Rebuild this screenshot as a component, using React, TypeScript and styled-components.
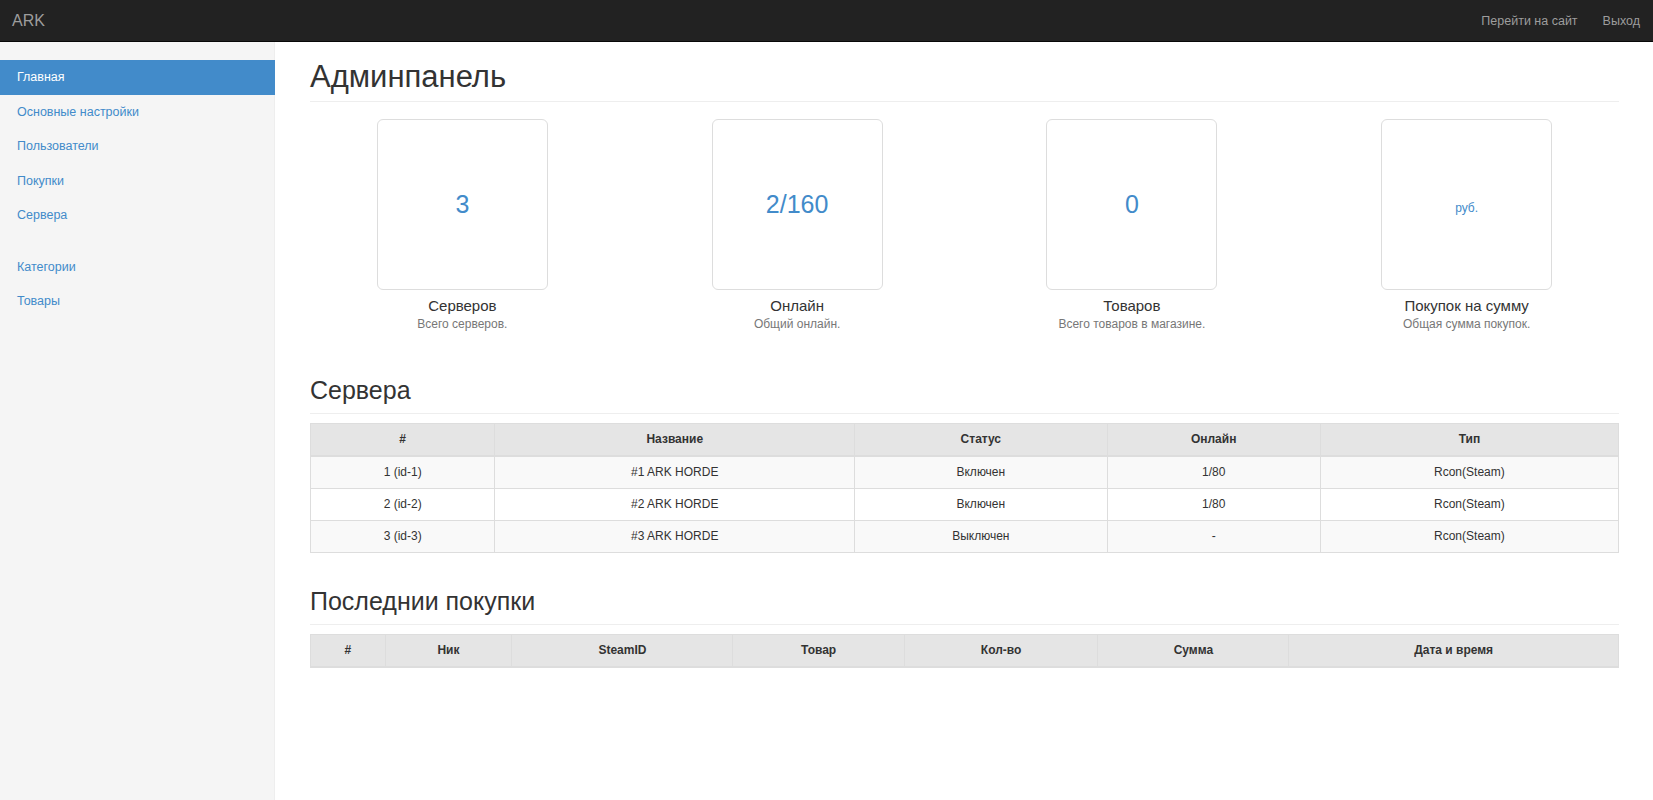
import React from 'react'
import styled, { createGlobalStyle } from 'styled-components'

const GlobalStyle = createGlobalStyle`
  html, body {
    margin: 0;
    padding: 0;
    background: #fff;
  }
  body {
    font-family: 'Liberation Sans', Arial, sans-serif;
    font-size: 12.5px;
    color: #333;
  }
  * {
    box-sizing: border-box;
  }
`

const Navbar = styled.div`
  align-items: center;
  background-color: #222;
  border-bottom: 1px solid #080808;
  display: flex;
  height: 42px;
  justify-content: space-between;
  padding: 0 13px 0 12px;
`

const Brand = styled.a`
  color: #9d9d9d;
  font-size: 16px;
  text-decoration: none;
`

const NavLinks = styled.div`
  display: flex;
  gap: 25px;
`

const NavLink = styled.a`
  color: #9d9d9d;
  font-size: 12.5px;
  text-decoration: none;
`

const Layout = styled.div`
  display: flex;
  min-height: calc(100vh - 42px);
`

const Sidebar = styled.div`
  background-color: #f5f5f5;
  border-right: 1px solid #eee;
  flex: 0 0 275px;
  padding-top: 18px;
`

const NavGroup = styled.ul`
  list-style: none;
  margin: 0 -1px 17px 0;
  padding: 0;
`

const SideItem = styled.li<{ $active?: boolean }>`
  background-color: ${({ $active }) => ($active ? '#428bca' : 'transparent')};
  color: ${({ $active }) => ($active ? '#fff' : '#428bca')};
  font-size: 12.5px;
  line-height: 18.5px;
  padding: 8px 17px;
  cursor: pointer;
`

const Main = styled.div`
  flex: 1;
  min-width: 0;
  padding: 0 34px 40px 35px;
`

const PageHeader = styled.h1`
  border-bottom: 1px solid #eee;
  font-size: 31px;
  font-weight: 400;
  line-height: 34px;
  margin: 18px 0 0;
  padding-bottom: 7px;
`

const Stats = styled.div`
  display: grid;
  grid-template-columns: repeat(4, 1fr);
  margin: 17px -15px 0;
`

const Stat = styled.div`
  align-items: center;
  display: flex;
  flex-direction: column;
`

const StatBox = styled.div<{ $small?: boolean }>`
  align-items: center;
  border: 1px solid #ddd;
  border-radius: 6px;
  color: #428bca;
  display: flex;
  font-size: ${({ $small }) => ($small ? '12px' : '25px')};
  height: 171px;
  justify-content: center;
  padding-top: ${({ $small }) => ($small ? '6px' : '0')};
  width: 171px;
`

const StatTitle = styled.div`
  font-size: 15px;
  line-height: 20px;
  margin-top: 6px;
`

const StatNote = styled.div`
  color: #777;
  font-size: 12px;
  line-height: 16px;
`

const SectionHeader = styled.h2<{ $top: number }>`
  border-bottom: 1px solid #eee;
  font-size: 25px;
  font-weight: 400;
  line-height: 28px;
  margin: ${({ $top }) => $top}px 0 0;
  padding-bottom: 9px;
`

const Table = styled.table`
  border: 1px solid #ddd;
  border-collapse: collapse;
  font-size: 12px;
  margin-top: 9px;
  table-layout: fixed;
  width: 100%;
`

const Th = styled.th`
  background-color: #e5e5e5;
  border: 1px solid #ddd;
  border-bottom-width: 2px;
  font-weight: 700;
  line-height: 15px;
  padding: 8px;
  text-align: center;
`

const Row = styled.tr`
  &:nth-child(odd) {
    background-color: #f9f9f9;
  }
`

const Td = styled.td`
  border: 1px solid #ddd;
  line-height: 15px;
  padding: 8px;
  text-align: center;
`

const stats = [
  { value: '3', title: 'Серверов', note: 'Всего серверов.' },
  { value: '2/160', title: 'Онлайн', note: 'Общий онлайн.' },
  { value: '0', title: 'Товаров', note: 'Всего товаров в магазине.' },
  { value: 'руб.', title: 'Покупок на сумму', note: 'Общая сумма покупок.', small: true }
]

const servers = [
  { id: '1 (id-1)', name: '#1 ARK HORDE', status: 'Включен', online: '1/80', type: 'Rcon(Steam)' },
  { id: '2 (id-2)', name: '#2 ARK HORDE', status: 'Включен', online: '1/80', type: 'Rcon(Steam)' },
  { id: '3 (id-3)', name: '#3 ARK HORDE', status: 'Выключен', online: '-', type: 'Rcon(Steam)' }
]

const serverCols = [
  { label: '#', width: '14.1%' },
  { label: 'Название', width: '27.5%' },
  { label: 'Статус', width: '19.3%' },
  { label: 'Онлайн', width: '16.3%' },
  { label: 'Тип', width: '22.8%' }
]

const purchaseCols = [
  { label: '#', width: '5.7%' },
  { label: 'Ник', width: '9.7%' },
  { label: 'SteamID', width: '16.9%' },
  { label: 'Товар', width: '13.1%' },
  { label: 'Кол-во', width: '14.8%' },
  { label: 'Сумма', width: '14.6%' },
  { label: 'Дата и время', width: '25.2%' }
]

export default function App() {
  return (
    <>
      <GlobalStyle />
      <Navbar>
        <Brand>ARK</Brand>
        <NavLinks>
          <NavLink>Перейти на сайт</NavLink>
          <NavLink>Выход</NavLink>
        </NavLinks>
      </Navbar>
      <Layout>
        <Sidebar>
          <NavGroup>
            <SideItem $active>Главная</SideItem>
            <SideItem>Основные настройки</SideItem>
            <SideItem>Пользователи</SideItem>
            <SideItem>Покупки</SideItem>
            <SideItem>Сервера</SideItem>
          </NavGroup>
          <NavGroup>
            <SideItem>Категории</SideItem>
            <SideItem>Товары</SideItem>
          </NavGroup>
        </Sidebar>
        <Main>
          <PageHeader>Админпанель</PageHeader>
          <Stats>
            {stats.map((s) => (
              <Stat key={s.title}>
                <StatBox $small={s.small}>{s.value}</StatBox>
                <StatTitle>{s.title}</StatTitle>
                <StatNote>{s.note}</StatNote>
              </Stat>
            ))}
          </Stats>

          <SectionHeader $top={44}>Сервера</SectionHeader>
          <Table>
            <thead>
              <tr>
                {serverCols.map((c) => (
                  <Th key={c.label} style={{ width: c.width }}>
                    {c.label}
                  </Th>
                ))}
              </tr>
            </thead>
            <tbody>
              {servers.map((s) => (
                <Row key={s.id}>
                  <Td>{s.id}</Td>
                  <Td>{s.name}</Td>
                  <Td>{s.status}</Td>
                  <Td>{s.online}</Td>
                  <Td>{s.type}</Td>
                </Row>
              ))}
            </tbody>
          </Table>

          <SectionHeader $top={34}>Последнии покупки</SectionHeader>
          <Table>
            <thead>
              <tr>
                {purchaseCols.map((c) => (
                  <Th key={c.label} style={{ width: c.width }}>
                    {c.label}
                  </Th>
                ))}
              </tr>
            </thead>
          </Table>
        </Main>
      </Layout>
    </>
  )
}
